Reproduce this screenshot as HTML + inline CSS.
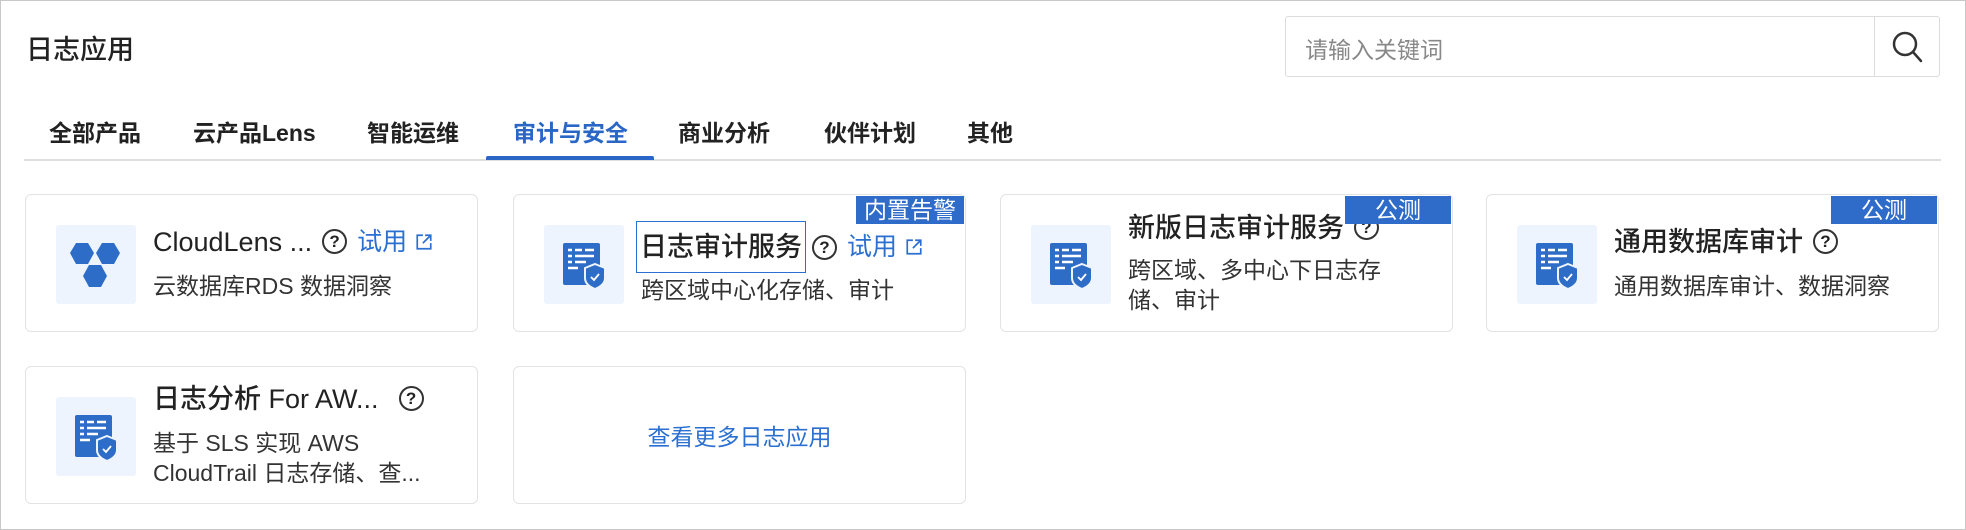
<!DOCTYPE html>
<html><head><meta charset="utf-8"><style>
*{box-sizing:border-box;margin:0;padding:0}
body{width:1966px;height:530px;background:#fff;font-family:"Liberation Sans","Noto Sans CJK SC",sans-serif;color:#222;position:relative;overflow:hidden;border:1px solid #c8c8c8}
.abs{position:absolute}
.title{left:25px;top:27px;font-size:27px;font-weight:500}
.search{left:1284px;top:15px;width:655px;height:61px;border:1px solid #dcdcdc;border-radius:3px}
.search span{position:absolute;left:19px;top:14px;font-size:23px;color:#888}
.search .btn{position:absolute;right:0;top:0;width:65px;height:59px;border-left:1px solid #dcdcdc}
.tab{top:113px;font-size:23px;font-weight:600;color:#222}
.line{left:23px;top:158px;width:1917px;height:2px;background:#dedede}
.ul{left:485px;top:155px;width:168px;height:4px;background:#2a66c6;border-radius:2px 2px 0 0}
.card{position:absolute;width:453px;height:138px;border:1.5px solid #e3e3e3;border-radius:6px;background:#fff}
.ic{position:absolute;left:30px;top:30px;width:80px;height:79px;background:#edf4fd;border-radius:3px}
.txt{position:absolute;left:127px;top:0;height:100%;display:flex;flex-direction:column;justify-content:center;width:320px}
.tt{font-size:27px;font-weight:500;color:#222;white-space:nowrap;display:flex;align-items:center;gap:10px;line-height:32px}
.ds{font-size:23px;color:#333;line-height:30px;margin-top:13px}
.q{display:inline-block;width:25px;height:25px;border:2px solid #333;border-radius:50%;font-size:17px;line-height:21px;text-align:center;font-weight:600;flex:none}
.try{color:#2b6fd1;font-size:25px;font-weight:400;display:flex;align-items:center;gap:8px}
.badge{position:absolute;top:1px;right:1px;background:#2f6bc8;color:#fff;font-size:23px;padding:0 8px;height:28px;line-height:28px}
</style></head><body>
<div class="abs title">日志应用</div>
<div class="abs search"><span>请输入关键词</span><div class="btn"><svg width="65" height="59" viewBox="0 0 65 59"><circle cx="30" cy="27" r="11" fill="none" stroke="#333" stroke-width="2.5"/><line x1="38" y1="35" x2="46" y2="44" stroke="#333" stroke-width="2.5" stroke-linecap="round"/></svg></div></div>
<div class="abs tab" style="left:48px">全部产品</div>
<div class="abs tab" style="left:192px">云产品Lens</div>
<div class="abs tab" style="left:366px">智能运维</div>
<div class="abs tab" style="left:512px;color:#2a66c6">审计与安全</div>
<div class="abs tab" style="left:677px">商业分析</div>
<div class="abs tab" style="left:823px">伙伴计划</div>
<div class="abs tab" style="left:966px">其他</div>
<div class="abs line"></div><div class="abs ul"></div>

<svg width="0" height="0" style="position:absolute"><defs>
<g id="doc"><rect x="19" y="18" width="37" height="42" rx="2" fill="#2e6dc7"/>
<g stroke="#fff" stroke-width="2.5"><line x1="24" y1="25" x2="28" y2="25"/><line x1="31" y1="25" x2="38" y2="25"/><line x1="41" y1="25" x2="50" y2="25"/><line x1="24" y1="31" x2="28" y2="31"/><line x1="31" y1="31" x2="50" y2="31"/><line x1="24" y1="37" x2="28" y2="37"/><line x1="31" y1="37" x2="42" y2="37"/><line x1="24" y1="43" x2="34" y2="43"/></g>
<path d="M51 39 L61 43 L61 53 Q61 60 51 64 Q41 60 41 53 L41 43 Z" fill="#2e6dc7" stroke="#edf4fd" stroke-width="2"/>
<path d="M47 52 L50 55 L55 49" fill="none" stroke="#fff" stroke-width="1.8"/></g>
</defs></svg>

<div class="card" style="left:24px;top:193px">
<div class="ic"><svg width="80" height="79"><g fill="#2e6dc7"><polygon points="14,28 20,18 32,18 38,28 32,39 20,39"/><polygon points="40,28 46,18 58,18 64,28 58,39 46,39"/><polygon points="27,51 33,40 45,40 51,51 45,62 33,62"/></g></svg></div>
<div class="txt"><div class="tt">CloudLens ... <span class="q">?</span><span class="try">试用 <svg width="18" height="18" viewBox="0 0 16 16"><path d="M7 2H2v12h12V9M9 2h5v5M14 2L7 9" fill="none" stroke="#2b6fd1" stroke-width="1.5"/></svg></span></div><div class="ds">云数据库RDS 数据洞察</div></div></div>

<div class="card" style="left:512px;top:193px">
<div class="ic"><svg width="80" height="79"><use href="#doc"/></svg></div>
<div class="badge">内置告警</div>
<div class="txt" style="left:122px"><div class="tt"><span style="border:1.5px solid #2b6fd1;padding:9px 3px;line-height:32px">日志审计服务</span><span class="q" style="margin-left:-4px">?</span><span class="try">试用 <svg width="18" height="18" viewBox="0 0 16 16"><path d="M7 2H2v12h12V9M9 2h5v5M14 2L7 9" fill="none" stroke="#2b6fd1" stroke-width="1.5"/></svg></span></div><div class="ds" style="margin-left:5px;margin-top:2px">跨区域中心化存储、审计</div></div></div>

<div class="card" style="left:999px;top:193px">
<div class="ic"><svg width="80" height="79"><use href="#doc"/></svg></div>
<div class="txt"><div class="tt">新版日志审计服务 <span class="q">?</span></div><div class="ds" style="width:270px;margin-top:11px">跨区域、多中心下日志存储、审计</div></div>
<div class="badge" style="padding:0 30px">公测</div></div>

<div class="card" style="left:1485px;top:193px">
<div class="ic"><svg width="80" height="79"><use href="#doc"/></svg></div>
<div class="txt"><div class="tt">通用数据库审计 <span class="q">?</span></div><div class="ds">通用数据库审计、数据洞察</div></div>
<div class="badge" style="padding:0 30px">公测</div></div>

<div class="card" style="left:24px;top:365px">
<div class="ic"><svg width="80" height="79"><use href="#doc"/></svg></div>
<div class="txt"><div class="tt">日志分析 For AW... <span class="q" style="margin-left:10px">?</span></div><div class="ds">基于 SLS 实现 AWS<br>CloudTrail 日志存储、查...</div></div></div>

<div class="card" style="left:512px;top:365px;display:flex;align-items:center;justify-content:center;font-size:23px;color:#2b6fd1">查看更多日志应用</div>
</body></html>
